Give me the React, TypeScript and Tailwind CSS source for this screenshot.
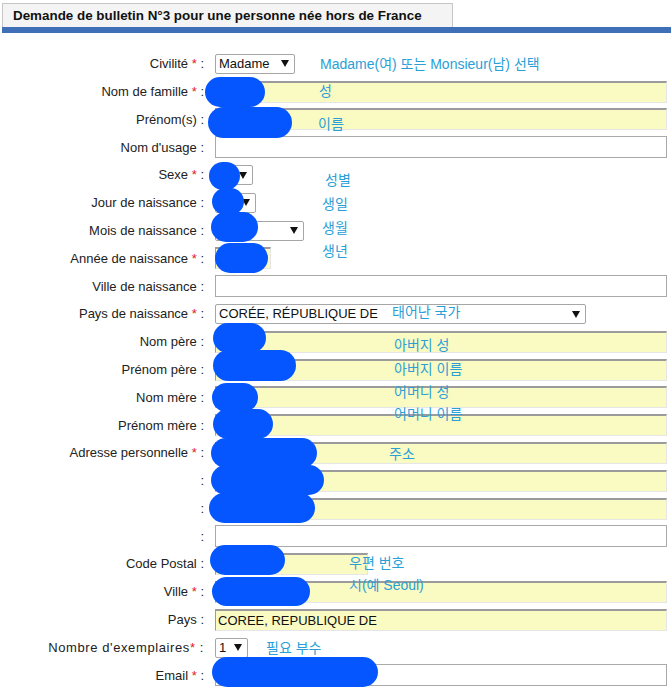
import React from 'react'

type Field =
  | { kind: 'select'; w: number; text?: string }
  | { kind: 'yellow'; w?: number; text?: string }
  | { kind: 'white' }

interface Row {
  label: string
  req?: boolean
  tight?: boolean
  field: Field
}

const ROWS: Row[] = [
  { label: 'Civilité', req: true, field: { kind: 'select', w: 80, text: 'Madame' } },
  { label: 'Nom de famille', req: true, field: { kind: 'yellow' } },
  { label: 'Prénom(s)', field: { kind: 'yellow' } },
  { label: "Nom d'usage", field: { kind: 'white' } },
  { label: 'Sexe', req: true, field: { kind: 'select', w: 38 } },
  { label: 'Jour de naissance', field: { kind: 'select', w: 41 } },
  { label: 'Mois de naissance', field: { kind: 'select', w: 89 } },
  { label: 'Année de naissance', req: true, field: { kind: 'yellow', w: 56 } },
  { label: 'Ville de naissance', field: { kind: 'white' } },
  { label: 'Pays de naissance', req: true, field: { kind: 'select', w: 371, text: 'CORÉE, RÉPUBLIQUE DE' } },
  { label: 'Nom père', field: { kind: 'yellow' } },
  { label: 'Prénom père', field: { kind: 'yellow' } },
  { label: 'Nom mère', field: { kind: 'yellow' } },
  { label: 'Prénom mère', field: { kind: 'yellow' } },
  { label: 'Adresse personnelle', req: true, field: { kind: 'yellow' } },
  { label: '', field: { kind: 'yellow' } },
  { label: '', field: { kind: 'yellow' } },
  { label: '', field: { kind: 'white' } },
  { label: 'Code Postal', field: { kind: 'yellow', w: 153 } },
  { label: 'Ville', req: true, field: { kind: 'yellow' } },
  { label: 'Pays', field: { kind: 'yellow', text: 'COREE, REPUBLIQUE DE' } },
  { label: "Nombre d'exemplaires", req: true, tight: true, field: { kind: 'select', w: 33, text: '1' } },
  { label: 'Email', req: true, field: { kind: 'white' } },
]

// korean notes written over the form
const NOTES: { text: string; x: number; y: number }[] = [
  { text: 'Madame(여) 또는 Monsieur(남) 선택', x: 320, y: 64 },
  { text: '성', x: 319, y: 91 },
  { text: '이름', x: 318, y: 124 },
  { text: '성별', x: 325, y: 180 },
  { text: '생일', x: 322, y: 204 },
  { text: '생월', x: 322, y: 228 },
  { text: '생년', x: 322, y: 251 },
  { text: '태어난 국가', x: 392, y: 312 },
  { text: '아버지 성', x: 394, y: 345 },
  { text: '아버지 이름', x: 394, y: 369 },
  { text: '어머니 성', x: 394, y: 392 },
  { text: '어머니 이름', x: 394, y: 414 },
  { text: '주소', x: 389, y: 454 },
  { text: '우편 번호', x: 349, y: 563 },
  { text: '시(예 Seoul)', x: 349, y: 585 },
  { text: '필요 부수', x: 266, y: 648 },
]

// redaction marks [left, top, right, bottom]
const BLOBS: [number, number, number, number][] = [
  [205, 77, 265, 107],
  [208, 107, 292, 138],
  [209, 162, 240, 190],
  [212, 188, 244, 215],
  [211, 212, 258, 242],
  [215, 243, 268, 273],
  [213, 323, 266, 353],
  [213, 350, 296, 381],
  [212, 383, 258, 412],
  [213, 409, 273, 439],
  [211, 438, 317, 468],
  [211, 465, 324, 495],
  [209, 493, 315, 523],
  [210, 545, 285, 575],
  [212, 577, 310, 606],
  [212, 657, 378, 687],
]

const Arrow = () => (
  <svg width="8" height="7" viewBox="0 0 8 7" className="shrink-0">
    <polygon points="0,0 8,0 4,7" fill="#111" />
  </svg>
)

function FieldView({ f }: { f: Field }) {
  if (f.kind === 'select') {
    return (
      <div
        className="h-[20px] border border-[#a6a6a6] rounded-[2px] bg-white flex items-center justify-between pl-[3px] pr-[5px] gap-[6px]"
        style={{ width: f.w }}
      >
        <span className="whitespace-nowrap text-[#111]">{f.text ?? ''}</span>
        <Arrow />
      </div>
    )
  }
  if (f.kind === 'yellow') {
    return (
      <div
        className={`h-[22px] bg-[#fafac3] border-t-2 border-l border-t-[#9b9b9b] border-l-[#9b9b9b] border-r border-b border-r-[#e6e6e6] border-b-[#e6e6e6] flex items-center pl-[2px] text-[#111] ${f.w ? '' : 'flex-1'}`}
        style={f.w ? { width: f.w } : undefined}
      >
        {f.text}
      </div>
    )
  }
  return <div className="h-[22px] flex-1 border border-[#a9a9a9] bg-white" />
}

export default function App() {
  return (
    <div className="relative w-[671px] h-[690px] overflow-hidden bg-white text-[13px] text-[#222] font-['Liberation_Sans',Arial,sans-serif]">
      <div className="pt-[3px] pl-[2px]">
        <div className="w-[451px] h-[24px] border border-b-0 border-[#c6c6c6] bg-[#f4f4f4] pl-[10px] leading-[23px] font-bold text-[13.4px] text-[#111]">
          Demande de bulletin N°3 pour une personne née hors de France
        </div>
        <div className="h-[6px] bg-[#3f70b7]" />
      </div>

      <div className="mt-[17px] flex flex-col">
        {ROWS.map((r, i) => (
          <div key={i} className="flex items-center h-[27.8px]">
            <div className={`w-[204px] text-right whitespace-nowrap ${r.tight ? 'tracking-[0.6px]' : ''}`}>
              {r.label}
              {r.req && <span className="text-[#e0201c]">{r.tight ? '*' : ' *'}</span>}
              {' :'}
            </div>
            <div className="ml-[11px] mr-[4px] flex-1 flex">
              <FieldView f={r.field} />
            </div>
          </div>
        ))}
      </div>

      {BLOBS.map(([l, t, r, b], i) => (
        <div
          key={'b' + i}
          className="absolute rounded-full bg-[#0556ff]"
          style={{ left: l, top: t, width: r - l, height: b - t }}
        />
      ))}

      {NOTES.map((n, i) => (
        <div
          key={'n' + i}
          className="absolute whitespace-nowrap leading-[16px] text-[14px] text-[#2a9fd6] font-['Liberation_Sans','Noto_Sans_CJK_KR',sans-serif]"
          style={{ left: n.x, top: n.y - 8 }}
        >
          {n.text}
        </div>
      ))}
    </div>
  )
}
